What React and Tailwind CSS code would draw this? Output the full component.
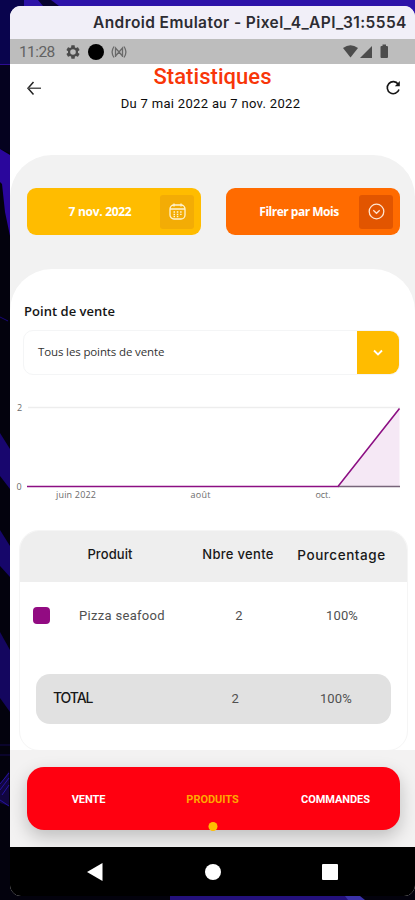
import React, { useState } from "react";

const tabs = [
  { name: "VENTE", pos: "w-[123px]" },
  { name: "PRODUITS", pos: "w-[125px]" },
  { name: "COMMANDES", pos: "w-[121px]" },
];

const products = [{ name: "Pizza seafood", count: 2, percent: "100%" }];

// Desktop wallpaper visible around the emulator window
const Wallpaper = () => (
  <svg className="absolute inset-0" width="415" height="900" viewBox="0 0 415 900">
    <rect width="415" height="900" fill="#03020d" />
    <rect width="415" height="14" fill="#2d13a8" />
    <path d="M0 0H24V8L10 16V64H0Z" fill="#09044d" />
    <path d="M38 0H51L59 6H43Z" fill="#07032f" />
    <path d="M0 64H10V153L0 149Z" fill="#05021f" />
    <path d="M0 64H10V65H0Z" fill="#2c0c93" />
    <path d="M0 149L10 155V236L5 212L2 184L0 182Z" fill="#2a069c" />
    <path d="M0 317L8 321" stroke="#19077a" />
    <path d="M0 433L10 449V489L0 476Z" fill="#18066e" />
    <path d="M0 530L10 546V577L0 566Z" fill="#16066a" />
    <path d="M0 632L10 650V712L0 698Z" fill="#14065f" />
    <path d="M0 745H10M0 755H10" stroke="#12064b" />
    <path d="M0 784L9 771V806L0 803Z" fill="#11063f" />
    <path d="M0 784L9 773M0 790L9 778M2 795L9 785M0 800L9 806" stroke="#2513a1" />
    <rect x="170" y="895" width="190" height="5" fill="#24117c" />
    <path d="M345 896H360L365 900H348Z" fill="#3b32a8" />
  </svg>
);

const StatusBar = () => (
  <div className="h-[25px] bg-[#bdbdbd] flex items-center pl-[9px] pr-[26px] text-[#626262]">
    <span className="font-[Roboto,sans-serif] text-[15.5px] w-[38px] leading-none tracking-[-0.6px] pt-[2px]">
      11:28
    </span>
    <svg className="ml-[8px]" width="16" height="16" viewBox="0 0 24 24" fill="#4b4b4b">
      <path
        fillRule="evenodd"
        d="M19.43 12.98c.04-.32.07-.64.07-.98s-.03-.66-.07-.98l2.11-1.65c.19-.15.24-.42.12-.64l-2-3.46c-.12-.22-.39-.3-.61-.22l-2.49 1c-.52-.4-1.08-.73-1.69-.98l-.38-2.65C14.46 2.18 14.25 2 14 2h-4c-.25 0-.46.18-.49.42l-.38 2.65c-.61.25-1.17.59-1.69.98l-2.49-1c-.23-.09-.49 0-.61.22l-2 3.46c-.13.22-.07.49.12.64l2.11 1.65c-.04.32-.07.65-.07.98s.03.66.07.98l-2.11 1.65c-.19.15-.24.42-.12.64l2 3.46c.12.22.39.3.61.22l2.49-1c.52.4 1.08.73 1.69.98l.38 2.65c.03.24.24.42.49.42h4c.25 0 .46-.18.49-.42l.38-2.65c.61-.25 1.17-.59 1.69-.98l2.49 1c.23.09.49 0 .61-.22l2-3.46c.12-.22.07-.49-.12-.64l-2.11-1.65zM12 16.2a4.200 4.200 0 1 1 0-8.400 4.200 4.200 0 0 1 0 8.400z"
      />
    </svg>
    <span className="ml-[7px] size-[16px] rounded-full bg-black" />
    <svg className="ml-[7px]" width="16" height="14" viewBox="0 0 16 14" fill="none" stroke="#6a6a6a" strokeWidth="1.300">
      <path d="M4.500 12V3L8 7L11.500 3V12M4.500 11L8 7L11.500 11" />
      <path d="M3 1.500Q-.8 7 3 12.500M13 1.500Q16.800 7 13 12.500" />
    </svg>
    <svg className="ml-auto" width="46" height="15" viewBox="0 0 46 15" fill="#4c4c4c">
      <path d="M0 4Q7.500 -1.500 15 4L7.500 13.500Z" />
      <path d="M17 14L29 2V14Z" />
      <path d="M39.500 .5H43V2H44Q45 2 45 3V13Q45 14 44 14H38.500Q37.500 14 37.500 13V3Q37.500 2 38.500 2H39.500Z" />
    </svg>
  </div>
);

const Header = () => (
  <div className="h-[91px] flex justify-between px-[16px]">
    <svg className="mt-[17px]" width="16" height="15" viewBox="0 0 16 15" fill="none" stroke="#222" strokeWidth="1.500">
      <path d="M7.500 1L2 7.300L7.500 13.500" />
      <path d="M2 7.300H15" stroke="#555" />
    </svg>
    <div className="flex flex-col items-center font-[Roboto,sans-serif] pr-[2px]">
      <h1 className="text-[22px] leading-[26px] font-medium text-[#f83608] tracking-[0.05px]">
        Statistiques
      </h1>
      <p className="mt-[5px] -ml-[4px] text-[13px] leading-[18px] tracking-[0.32px] text-[#0c0c0c]">
        Du 7 mai 2022 au 7 nov. 2022
      </p>
    </div>
    <svg className="mt-[16px] -mr-[2px]" width="16" height="16" viewBox="0 0 16 16" fill="none" stroke="#161616" strokeWidth="1.600">
      <path d="M13.200 4.200A6 6 0 1 0 14 9.500" />
      <path d="M14.800 1V6.200H9.800Z" fill="#161616" stroke="none" />
    </svg>
  </div>
);

const Filters = () => (
  <div className="h-[47px] flex justify-between pl-[17px] pr-[15px] font-['Open_Sans','Noto_Sans',sans-serif] font-bold text-[12px] text-white">
    <button className="w-[174px] h-[47px] rounded-[9px] bg-[#ffbc00] flex items-center pr-[7px]">
      <span className="flex-1 text-center pl-[13px] tracking-[-0.3px]">7 nov. 2022</span>
      <span className="size-[34px] rounded-[3px] bg-[#f3ac05] flex items-center justify-center">
        <svg width="17" height="17" viewBox="0 0 17 17" fill="none" stroke="#fff3d2" strokeWidth="1.300">
          <rect x="1" y="2" width="15" height="14" rx="4" />
          <path d="M1 6H16M5 .5V3.500M12 .5V3.500" />
          <path d="M4.500 9H13M4.500 11.300H13M4.500 13.500H10" strokeDasharray="1.500 1.800" />
        </svg>
      </span>
    </button>
    <button className="w-[174px] h-[47px] rounded-[9px] bg-[#ff6b00] flex items-center pr-[7px]">
      <span className="flex-1 text-center pl-[13px] tracking-[-0.5px]">Filrer par Mois</span>
      <span className="size-[34px] rounded-[3px] bg-[#e25500] flex items-center justify-center">
        <svg className="-mt-[1px]" width="17" height="17" viewBox="0 0 17 17" fill="none" stroke="#ffe4cf" strokeWidth="1.300">
          <circle cx="8.500" cy="8.500" r="7.300" />
          <path d="M5.300 7.300L8.500 10.300L11.700 7.300" />
        </svg>
      </span>
    </button>
  </div>
);

const SalesChart = () => (
  <svg className="block mt-[23px]" width="405" height="105" viewBox="10 398 405 105" fontFamily="'Open Sans','Noto Sans',sans-serif" fontSize="9" fill="#6b6b6b">
    <path d="M28 407.500H400" stroke="#ededed" strokeWidth="1.500" />
    <path d="M338 486L399.500 408V486Z" fill="#f5e8f5" />
    <path d="M338 486.500H400" stroke="#77647a" strokeWidth="1.400" />
    <path d="M27 486.500H338L399.500 408.500" fill="none" stroke="#8c0f83" strokeWidth="1.600" />
    <text x="17" y="411">2</text>
    <text x="16.500" y="489.500">0</text>
    <text x="56" y="498" textLength="40">juin 2022</text>
    <text x="190.500" y="498" textLength="20">août</text>
    <text x="315.500" y="498" textLength="15">oct.</text>
  </svg>
);

const ProductTable = () => (
  <div className="mt-[27px] ml-[9px] w-[389px] h-[221px] rounded-[20px] border border-[#f5f5f5] overflow-hidden text-[13px]">
    <div className="h-[51px] bg-[#eeeeee] flex items-center text-center font-[Inter,sans-serif] font-medium text-[#181818] pb-[3px]">
      <span className="w-[180px] tracking-[0.1px]">Produit</span>
      <span className="w-[76px] tracking-[0.3px]">Nbre vente</span>
      <span className="w-[131px] text-[13.5px] tracking-[0.55px]">Pourcentage</span>
    </div>
    {products.map((p) => (
      <div key={p.name} className="h-[67px] flex items-center text-center font-[Roboto,sans-serif] text-[#505050]">
        <span className="ml-[13px] size-[17px] rounded-[4px] bg-[#920b82]" />
        <span className="ml-[20px] w-[104px] tracking-[0.3px]">{p.name}</span>
        <span className="w-[130px]">{p.count}</span>
        <span className="w-[76px] tracking-[0.1px]">{p.percent}</span>
      </div>
    ))}
    <div className="mt-[25px] ml-[16px] w-[355px] h-[50px] rounded-[14px] bg-[#e1e1e1] flex items-center font-[Roboto,sans-serif] text-[#505050]">
      <span className="pl-[17px] w-[160px] pb-[4px] font-[Inter,sans-serif] font-medium text-[14px] tracking-[-1.1px] text-[#181818]">
        TOTAL
      </span>
      <span className="w-[80px] pl-[4px] text-center">2</span>
      <span className="w-[120px] pl-[8px] text-center tracking-[0.1px]">100%</span>
    </div>
  </div>
);

const App = () => {
  const [activeTab, setActiveTab] = useState("PRODUITS");

  return (
    <div className="relative w-[415px] h-[900px] overflow-hidden">
      <Wallpaper />

      <div className="relative pt-[6px] pl-[10px]">
        <div className="w-[405px] h-[890px] rounded-[11px] overflow-hidden bg-white flex flex-col">
          {/* Emulator title */}
          <div className="h-[33px] bg-[#f1eff8] flex items-center pl-[83px] font-[Inter,sans-serif] font-semibold text-[15.5px] text-[#2d2c32] whitespace-nowrap tracking-[0.41px]">
            Android Emulator - Pixel_4_API_31:5554
          </div>
          <StatusBar />
          <Header />

          <div className="h-[595px] bg-[#f2f2f2] rounded-t-[42px] pt-[33px]">
            <Filters />
            <div className="mt-[34px] h-[481px] bg-white rounded-t-[42px] pt-[33px]">
              <h2 className="ml-[14px] font-['Open_Sans','Noto_Sans',sans-serif] font-semibold text-[13px] leading-[18px] text-[#151515] tracking-[0.03px]">
                Point de vente
              </h2>
              <button className="mt-[10px] ml-[13px] w-[377px] h-[45px] rounded-[10px] border border-[#f4f5f6] flex items-center overflow-hidden">
                <span className="flex-1 text-left pl-[14px] pb-[2px] font-['Open_Sans','Noto_Sans',sans-serif] text-[11.5px] text-[#333] tracking-[-0.13px]">
                  Tous les points de vente
                </span>
                <span className="w-[42px] h-[43px] bg-[#ffbc00] flex items-center justify-center">
                  <svg width="12" height="8" viewBox="0 0 12 8" fill="none" stroke="#fff" strokeWidth="1.800">
                    <path d="M2 1.500L6 5.500L10 1.500" />
                  </svg>
                </span>
              </button>
              <SalesChart />
              <ProductTable />
            </div>
          </div>

          {/* Bottom tabs */}
          <div className="h-[97px] bg-[#f3f2f2] pt-[17px] pl-[17px] overflow-hidden">
            <div className="w-[373px] h-[63px] rounded-[17px] bg-[#ff0010] flex text-center font-[Roboto,sans-serif] font-bold text-[11px] text-white shadow-[0_7px_18px_rgba(0,0,0,0.22)]">
              {tabs.map((tab) => (
                <button
                  key={tab.name}
                  onClick={() => setActiveTab(tab.name)}
                  className={`relative pt-[3px] tracking-[-0.05px] ${tab.pos} ${activeTab === tab.name ? "text-[#ffa800]" : ""}`}
                >
                  {tab.name}
                  {activeTab === tab.name && (
                    <span className="absolute -bottom-px left-1/2 -translate-x-1/2 size-[9px] rounded-full bg-[#ffbf00]" />
                  )}
                </button>
              ))}
            </div>
          </div>

          {/* Android navigation */}
          <div className="h-[49px] bg-black flex items-center pl-[77px]">
            <svg width="16" height="18" viewBox="0 0 16 18" fill="#fff">
              <path d="M0 9L15.500 0V18Z" />
            </svg>
            <span className="ml-[102px] size-[16px] rounded-full bg-white" />
            <span className="ml-[101px] size-[16px] rounded-[1px] bg-white" />
          </div>
        </div>
      </div>
    </div>
  );
};

export default App;
